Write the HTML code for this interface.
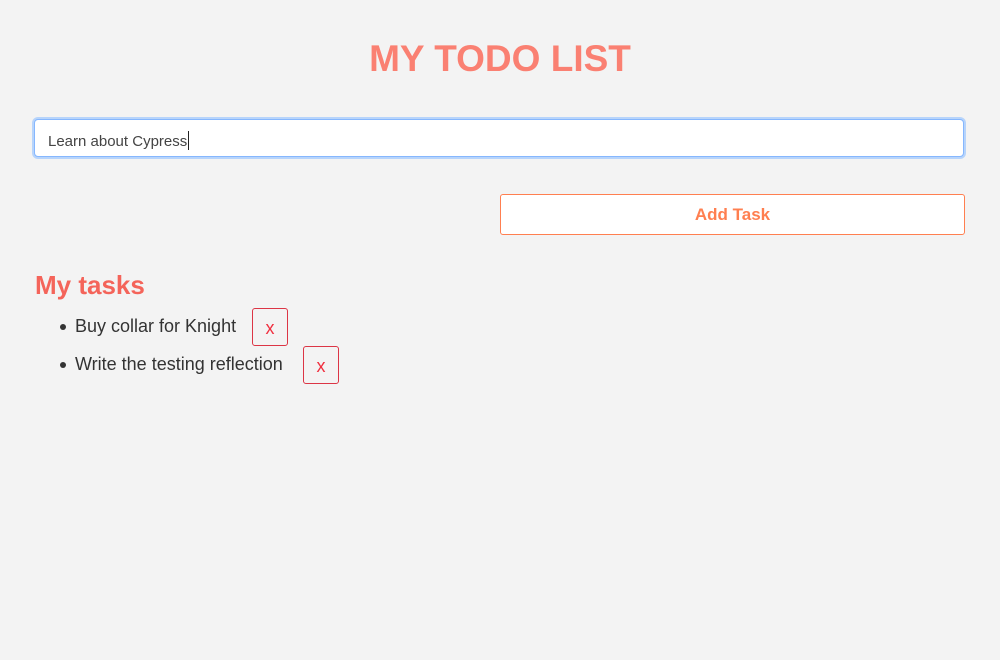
<!DOCTYPE html>
<html><head><meta charset="utf-8"><style>
html,body{margin:0;padding:0;background:#f3f3f3;width:1000px;height:660px;overflow:hidden;font-family:"Liberation Sans",sans-serif;color:#333;}
h1{position:absolute;top:36px;left:0;width:1000px;margin:0;text-align:center;font-size:37px;font-weight:bold;color:#fa8072;line-height:46px;}
.inp{position:absolute;left:34px;top:119px;width:928px;height:36px;background:#fff;border:1px solid #86b7fe;border-radius:4px;box-shadow:0 0 0 2px #b7d4fb;}
.inp span{position:absolute;left:13px;top:11px;font-size:15px;color:#444;line-height:18px;}
.inp i{display:inline-block;width:1px;height:19px;background:#222;vertical-align:-4px;margin-left:1px;}
.btn{position:absolute;left:500px;top:194px;width:463px;height:39px;background:#fff;border:1px solid #ff7f50;border-radius:3px;color:#ff7f50;font-weight:bold;font-size:17px;text-align:center;line-height:39px;}
h2{position:absolute;left:35px;top:268px;margin:0;font-size:26px;font-weight:bold;color:#f4645a;line-height:34px;}
.li{position:absolute;left:75px;font-size:18px;color:#333;line-height:20px;}
.li:before{content:"";position:absolute;left-15px;left:-15px;top:8px;width:6px;height:6px;border-radius:50%;background:#333;}
.x{position:absolute;width:36px;height:38px;border:1px solid #dc3545;border-radius:3px;color:#f03040;font-size:18px;text-align:center;line-height:38px;box-sizing:border-box;}
</style></head><body>
<h1>MY TODO LIST</h1>
<div class="inp"><span>Learn about Cypress<i></i></span></div>
<div class="btn">Add Task</div>
<h2>My tasks</h2>
<div class="li" style="top:316px">Buy collar for Knight</div>
<div class="x" style="left:252px;top:308px">x</div>
<div class="li" style="top:354px">Write the testing reflection</div>
<div class="x" style="left:303px;top:346px">x</div>
</body></html>
